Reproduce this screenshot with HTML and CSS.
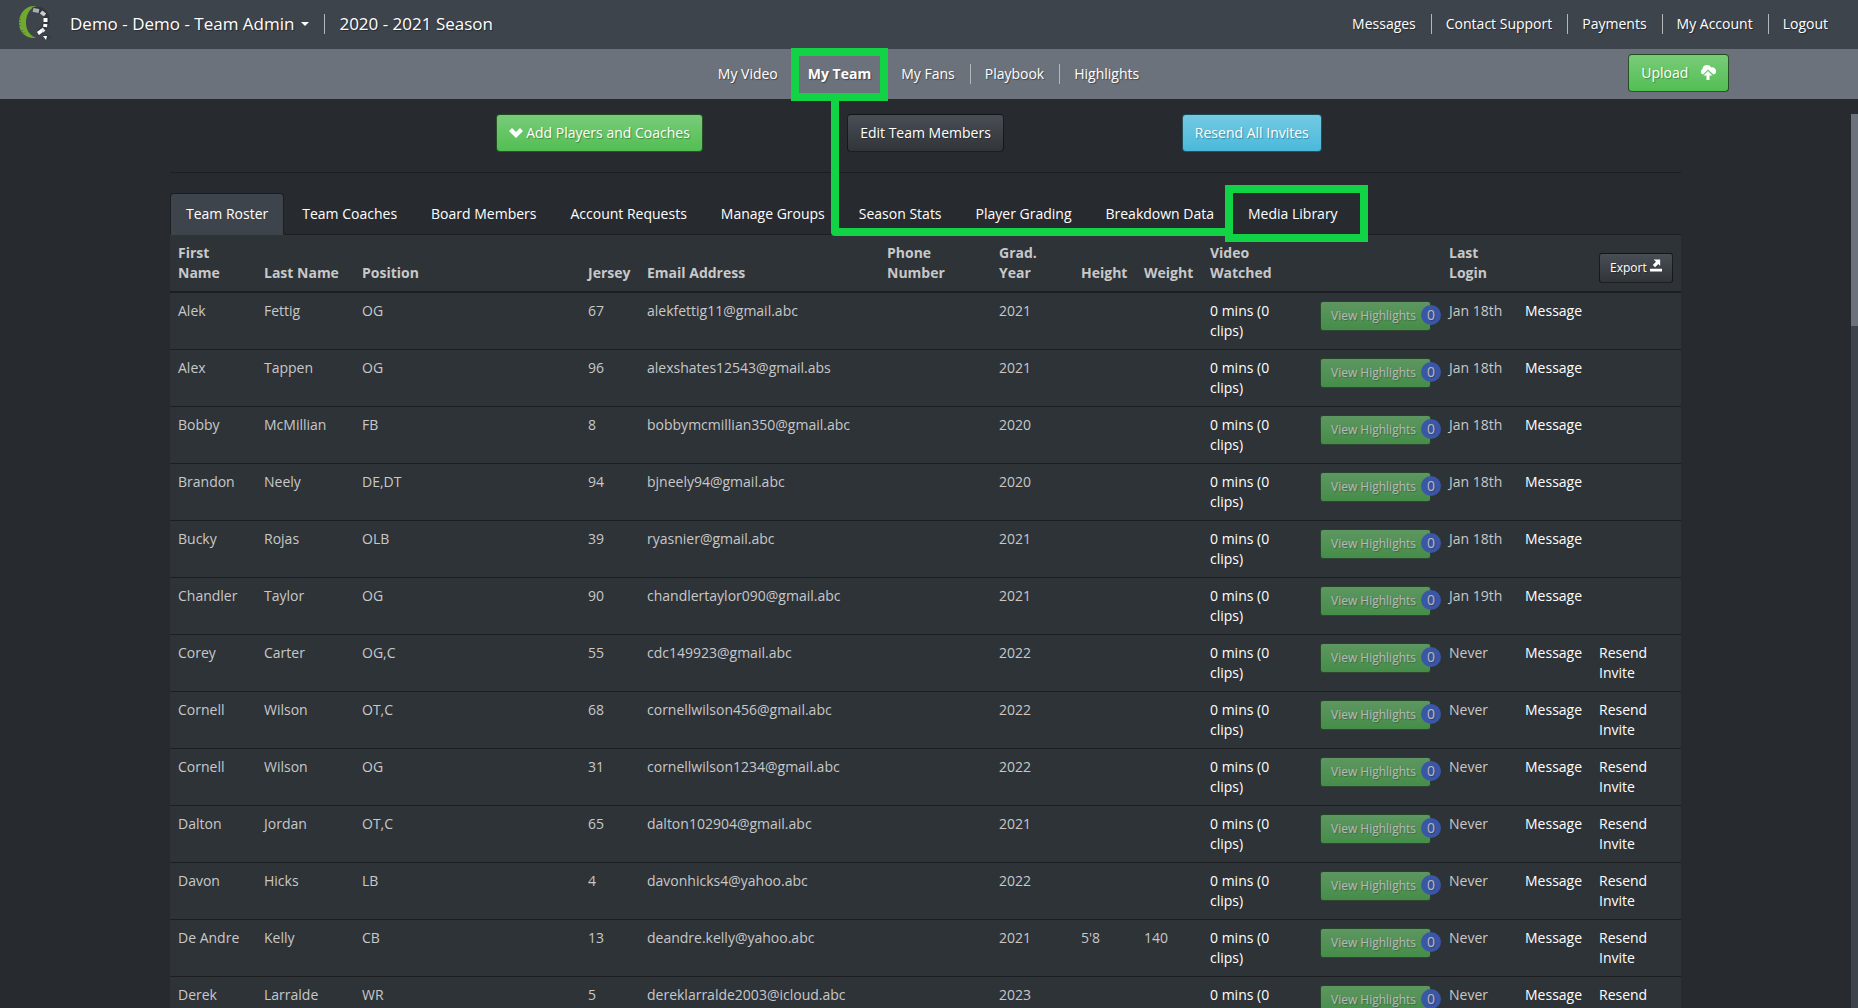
FILE: index.html
```html
<!DOCTYPE html>
<html lang="en">
<head>
<meta charset="utf-8">
<title>Team Roster</title>
<link rel="stylesheet" href="styles.css">
</head>
<body>
<header class="topbar">
  <a class="logo" href="#" aria-label="Home">
    <svg width="36" height="38" viewBox="0 0 36 38" aria-hidden="true">
      <path d="M18 1C8 0 1 8 1 18c0 9 7 16 17 15C11 30 8 24 8 18 8 10 11 4 18 1z" fill="#6faa2e"/>
      <path d="M2 14v9M4 25l3 4" stroke="#3e444c" stroke-width="1" stroke-dasharray="1 2" fill="none"/>
      <path d="M15 5.500C26 3 30 11 28 18c-1 5-3 7-7 9" fill="none" stroke="#2f353b" stroke-width="6"/>
      <path d="M15 5l6 1" stroke="#aaaeb2" stroke-width="4"/>
      <path d="M23 7l4 3" stroke="#c9cccf" stroke-width="4"/>
      <path d="M27.500 13v4M27.500 19l-.5 3" stroke="#fff" stroke-width="4"/>
      <path d="M26 24l-2 2" stroke="#e4e6e8" stroke-width="4"/>
      <path d="M19 27l4-3 2 3-4 3z" fill="#fff"/>
      <path d="M25 30l5-1 4 4-7 3z" fill="#2f3f4b"/>
      <path d="M25 31h4l-1 4z" fill="#fff"/>
    </svg>
  </a>
  <button class="team-menu" type="button">Demo - Demo - Team Admin<span class="caret"></span></button>
  <span class="season">2020 - 2021 Season</span>
  <nav class="links account" aria-label="Account">
    <a href="#">Messages</a><a href="#">Contact Support</a><a href="#">Payments</a><a href="#">My Account</a><a href="#">Logout</a>
  </nav>
</header>
<div class="subbar">
  <nav class="links sections" aria-label="Sections">
    <a href="#">My Video</a><a class="current" href="#">My Team</a><a href="#">My Fans</a><a href="#">Playbook</a><a href="#">Highlights</a>
  </nav>
  <button class="btn green upload" type="button">Upload
    <svg width="16" height="15" viewBox="0 0 16 15" aria-hidden="true"><path d="M3 9.500A3 3 0 0 1 2.500 4 4.500 4.500 0 0 1 7 0a4.500 4.500 0 0 1 4.300 2.500A3.600 3.600 0 0 1 13.500 9.500L8 4.500 3 9.500z M8 6l4.500 4.500H9.500V15h-3v-4.500H3.500z" fill="#fff"/></svg>
  </button>
</div>
<main class="content">
  <div class="actions">
    <button class="btn green" type="button"><svg width="14" height="10" viewBox="0 0 14 10" aria-hidden="true"><path d="M0 3l3-3 4 4 4-4 3 3-7 7z" fill="#fff"/></svg> Add Players and Coaches</button>
    <button class="btn dark" type="button">Edit Team Members</button>
    <button class="btn blue" type="button">Resend All Invites</button>
  </div>
  <nav class="tabs" aria-label="Team">
    <a class="active" href="#">Team Roster</a>
    <a href="#">Team Coaches</a>
    <a href="#">Board Members</a>
    <a href="#">Account Requests</a>
    <a href="#">Manage Groups</a>
    <a href="#">Season Stats</a>
    <a href="#">Player Grading</a>
    <a href="#">Breakdown Data</a>
    <a href="#">Media Library</a>
  </nav>
  <table class="roster">
    <colgroup><col class="c-first"><col class="c-last"><col class="c-pos"><col class="c-jersey"><col class="c-email"><col class="c-phone"><col class="c-grad"><col class="c-height"><col class="c-weight"><col class="c-video"><col class="c-high"><col class="c-login"><col class="c-msg"><col class="c-invite"></colgroup>
    <thead>
      <tr><th>First Name</th><th>Last Name</th><th>Position</th><th>Jersey</th><th>Email Address</th><th>Phone Number</th><th>Grad. Year</th><th>Height</th><th>Weight</th><th>Video Watched</th><th></th><th>Last Login</th><th></th><th class="export-cell"><button class="btn dark small" type="button">Export <svg width="12" height="13" viewBox="0 0 13 13" aria-hidden="true"><path d="M4 0h7v7L9 5 5.500 8.500 3 6l3.500-3.500zM0 10h13v3H0z" fill="#fff"/></svg></button></th></tr>
    </thead>
    <tbody>
      <tr><td>Alek</td><td>Fettig</td><td>OG</td><td>67</td><td>alekfettig11@gmail.abc</td><td></td><td>2021</td><td></td><td></td><td><a href="#">0 mins (0 clips)</a></td><td><button class="btn green highlights" type="button" disabled>View Highlights<span class="badge">0</span></button></td><td>Jan 18th</td><td><a href="#">Message</a></td><td></td></tr>
      <tr><td>Alex</td><td>Tappen</td><td>OG</td><td>96</td><td>alexshates12543@gmail.abs</td><td></td><td>2021</td><td></td><td></td><td><a href="#">0 mins (0 clips)</a></td><td><button class="btn green highlights" type="button" disabled>View Highlights<span class="badge">0</span></button></td><td>Jan 18th</td><td><a href="#">Message</a></td><td></td></tr>
      <tr><td>Bobby</td><td>McMillian</td><td>FB</td><td>8</td><td>bobbymcmillian350@gmail.abc</td><td></td><td>2020</td><td></td><td></td><td><a href="#">0 mins (0 clips)</a></td><td><button class="btn green highlights" type="button" disabled>View Highlights<span class="badge">0</span></button></td><td>Jan 18th</td><td><a href="#">Message</a></td><td></td></tr>
      <tr><td>Brandon</td><td>Neely</td><td>DE,DT</td><td>94</td><td>bjneely94@gmail.abc</td><td></td><td>2020</td><td></td><td></td><td><a href="#">0 mins (0 clips)</a></td><td><button class="btn green highlights" type="button" disabled>View Highlights<span class="badge">0</span></button></td><td>Jan 18th</td><td><a href="#">Message</a></td><td></td></tr>
      <tr><td>Bucky</td><td>Rojas</td><td>OLB</td><td>39</td><td>ryasnier@gmail.abc</td><td></td><td>2021</td><td></td><td></td><td><a href="#">0 mins (0 clips)</a></td><td><button class="btn green highlights" type="button" disabled>View Highlights<span class="badge">0</span></button></td><td>Jan 18th</td><td><a href="#">Message</a></td><td></td></tr>
      <tr><td>Chandler</td><td>Taylor</td><td>OG</td><td>90</td><td>chandlertaylor090@gmail.abc</td><td></td><td>2021</td><td></td><td></td><td><a href="#">0 mins (0 clips)</a></td><td><button class="btn green highlights" type="button" disabled>View Highlights<span class="badge">0</span></button></td><td>Jan 19th</td><td><a href="#">Message</a></td><td></td></tr>
      <tr><td>Corey</td><td>Carter</td><td>OG,C</td><td>55</td><td>cdc149923@gmail.abc</td><td></td><td>2022</td><td></td><td></td><td><a href="#">0 mins (0 clips)</a></td><td><button class="btn green highlights" type="button" disabled>View Highlights<span class="badge">0</span></button></td><td>Never</td><td><a href="#">Message</a></td><td><a href="#">Resend Invite</a></td></tr>
      <tr><td>Cornell</td><td>Wilson</td><td>OT,C</td><td>68</td><td>cornellwilson456@gmail.abc</td><td></td><td>2022</td><td></td><td></td><td><a href="#">0 mins (0 clips)</a></td><td><button class="btn green highlights" type="button" disabled>View Highlights<span class="badge">0</span></button></td><td>Never</td><td><a href="#">Message</a></td><td><a href="#">Resend Invite</a></td></tr>
      <tr><td>Cornell</td><td>Wilson</td><td>OG</td><td>31</td><td>cornellwilson1234@gmail.abc</td><td></td><td>2022</td><td></td><td></td><td><a href="#">0 mins (0 clips)</a></td><td><button class="btn green highlights" type="button" disabled>View Highlights<span class="badge">0</span></button></td><td>Never</td><td><a href="#">Message</a></td><td><a href="#">Resend Invite</a></td></tr>
      <tr><td>Dalton</td><td>Jordan</td><td>OT,C</td><td>65</td><td>dalton102904@gmail.abc</td><td></td><td>2021</td><td></td><td></td><td><a href="#">0 mins (0 clips)</a></td><td><button class="btn green highlights" type="button" disabled>View Highlights<span class="badge">0</span></button></td><td>Never</td><td><a href="#">Message</a></td><td><a href="#">Resend Invite</a></td></tr>
      <tr><td>Davon</td><td>Hicks</td><td>LB</td><td>4</td><td>davonhicks4@yahoo.abc</td><td></td><td>2022</td><td></td><td></td><td><a href="#">0 mins (0 clips)</a></td><td><button class="btn green highlights" type="button" disabled>View Highlights<span class="badge">0</span></button></td><td>Never</td><td><a href="#">Message</a></td><td><a href="#">Resend Invite</a></td></tr>
      <tr><td>De Andre</td><td>Kelly</td><td>CB</td><td>13</td><td>deandre.kelly@yahoo.abc</td><td></td><td>2021</td><td>5'8</td><td>140</td><td><a href="#">0 mins (0 clips)</a></td><td><button class="btn green highlights" type="button" disabled>View Highlights<span class="badge">0</span></button></td><td>Never</td><td><a href="#">Message</a></td><td><a href="#">Resend Invite</a></td></tr>
      <tr><td>Derek</td><td>Larralde</td><td>WR</td><td>5</td><td>dereklarralde2003@icloud.abc</td><td></td><td>2023</td><td></td><td></td><td><a href="#">0 mins (0 clips)</a></td><td><button class="btn green highlights" type="button" disabled>View Highlights<span class="badge">0</span></button></td><td>Never</td><td><a href="#">Message</a></td><td><a href="#">Resend Invite</a></td></tr>
    </tbody>
  </table>
</main>
<div class="scrollbar" aria-hidden="true"><div class="thumb"></div></div>
<svg class="callout" width="577" height="194" viewBox="0 0 577 194" aria-hidden="true">
  <g fill="none" stroke="#11d345" stroke-width="8">
    <path d="M4 4h89v45H4z"/>
    <path d="M44 49v135h394" stroke-linejoin="round"/>
    <path d="M438 141h135v49H438z"/>
  </g>
</svg>
</body>
</html>
```

FILE: styles.css
```css
* { box-sizing: border-box; }

body {
  position: relative;
  margin: 0;
  height: 100vh;
  overflow: hidden;
  background: #272b30;
  color: #c8c8c8;
  font: 14px/20px "Open Sans", sans-serif;
}

a { color: #fff; text-decoration: none; }

button { font: inherit; color: #fff; }

.topbar {
  display: flex;
  align-items: center;
  height: 49px;
  padding: 0 15px 1px 18px;
  background: #3e444c;
  color: #fff;
  text-shadow: 1px 1px 1px rgba(0, 0, 0, .4);
}

.logo { display: flex; margin-right: 16px; }

.team-menu {
  display: flex;
  align-items: center;
  gap: 7px;
  padding: 0;
  border: 0;
  background: none;
  font-size: 17px;
  text-shadow: inherit;
}

.caret {
  border: 4px solid transparent;
  border-top-color: #fff;
  border-bottom: 0;
}

.season {
  margin-left: 15px;
  padding-left: 14px;
  border-left: 1px solid #b4b6b9;
  font-size: 17px;
}

.links { display: flex; text-shadow: 1px 1px 1px rgba(0, 0, 0, .4); }
.links a { padding: 0 15px 0 14px; }
.links a + a { border-left: 1px solid #b4b6b9; }
.links .current { font-weight: 700; }
.account { margin-left: auto; }

.subbar {
  display: grid;
  grid-template-columns: 1fr auto 1fr;
  align-items: center;
  height: 50px;
  background: #6c727b;
}

.sections { grid-column: 2; }
.upload { justify-self: end; margin: 0 129px 2px 0; }
.upload svg { margin-left: 8px; vertical-align: -2px; }

.btn {
  padding: 8px 12px;
  border: 1px solid rgba(0, 0, 0, .6);
  border-radius: 4px;
  text-shadow: 1px 1px 1px rgba(0, 0, 0, .3);
  white-space: nowrap;
}

.green { background: linear-gradient(#78cc78, #53be53); }
.dark { background: linear-gradient(#484e55, #313539); }
.blue { background: linear-gradient(#74cae3, #4ab9db); }

.small {
  padding: 4px 10px;
  border-radius: 3px;
  font-size: 12px;
}

.content { padding: 15px 177px 0 170px; }

.actions {
  display: grid;
  grid-template-columns: repeat(3, 1fr);
  justify-items: center;
  padding: 0 266px 20px;
  border-bottom: 1px solid #1c1e22;
}

.tabs {
  display: flex;
  gap: 2px;
  margin-top: 20px;
  border-bottom: 1px solid #1c1e22;
}

.tabs a {
  margin-bottom: -1px;
  padding: 10px 15px;
  border: 1px solid transparent;
  border-radius: 4px 4px 0 0;
}

.tabs .active {
  border-color: #1c1e22;
  border-bottom-color: #3e444c;
  background: #3e444c;
}

.roster {
  width: 100%;
  table-layout: fixed;
  border-spacing: 0;
  background: #2e3338;
}

.c-first { width: 86px; }
.c-last { width: 98px; }
.c-pos { width: 226px; }
.c-jersey { width: 59px; }
.c-email { width: 240px; }
.c-phone { width: 112px; }
.c-grad { width: 82px; }
.c-height { width: 63px; }
.c-weight { width: 66px; }
.c-video { width: 110px; }
.c-high { width: 129px; }
.c-login { width: 76px; }
.c-msg { width: 74px; }
.c-invite { width: 90px; }

th, td { padding: 8px; text-align: left; }
th { vertical-align: bottom; border-bottom: 2px solid #1c1e22; }
td { height: 57px; vertical-align: top; border-bottom: 1px solid #1c1e22; }
.export-cell { font-weight: 400; }
td .btn, th .btn { display: block; }

.highlights {
  position: relative;
  width: 111px;
  height: 30px;
  padding: 3px 10px;
  border-radius: 3px;
  font-size: 12px;
  text-align: left;
  opacity: .65;
}

.badge {
  position: absolute;
  top: 3px;
  right: -11px;
  width: 20px;
  border-radius: 10px;
  background: #4169e1;
  font-size: 14px;
  line-height: 20px;
  text-align: center;
}

.scrollbar {
  position: absolute;
  top: 326px;
  right: 0;
  bottom: 0;
  width: 7px;
  background: #3e444c;
}

.thumb {
  height: 212px;
  margin-top: -212px;
  background: #6c727b;
}

.callout {
  position: absolute;
  top: 48px;
  left: calc(50% - 138px);
}
```
